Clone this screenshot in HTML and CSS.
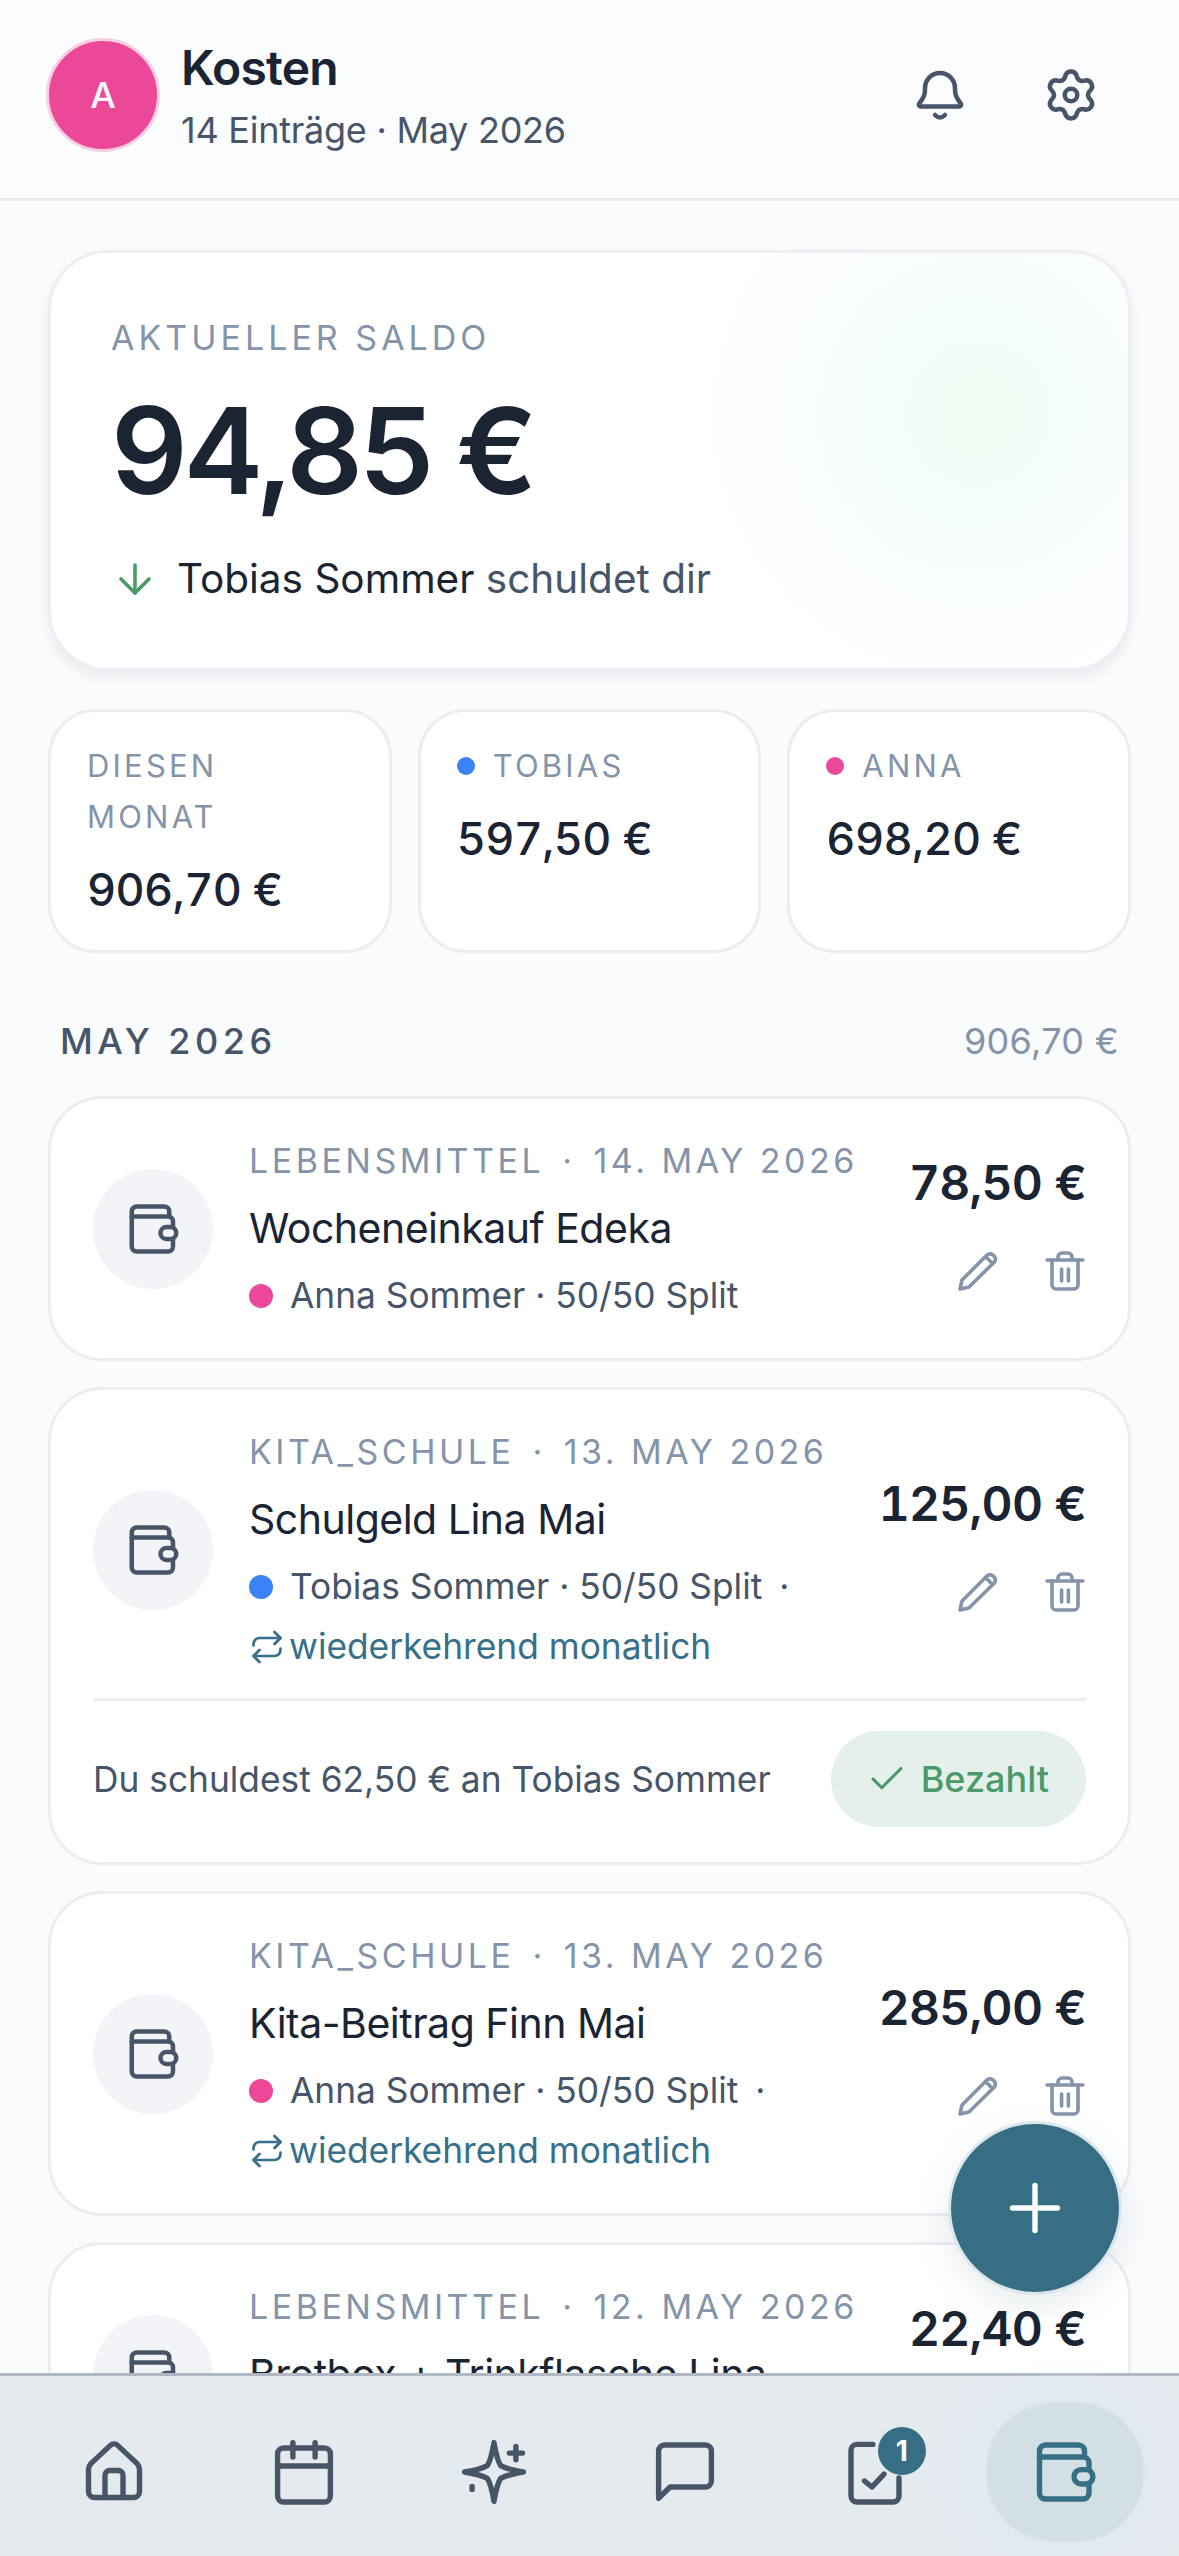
FILE: index.html
```html
<!DOCTYPE html>
<html lang="de">
<head>
	<title>Kosten</title>
	<meta charset="UTF-8">
	<meta name="viewport" content="width=device-width, initial-scale=1">
	<link rel="stylesheet" href="styles.css">
</head>
<body>
	<svg class="sprite" xmlns="http://www.w3.org/2000/svg">
		<symbol id="i-bell" viewBox="0 0 24 24"><path d="M4.200 16.600h15.600c.6 0 .9-.7.5-1.200-1.100-1.400-2.300-2.700-2.300-5.400V9.200a6 6 0 0 0-12 0V10c0 2.700-1.200 4-2.300 5.400-.4.500-.1 1.200.5 1.200Z"/><path d="M10 20c.6.6 1.300 1 2 1s1.400-.4 2-1"/></symbol>
		<symbol id="i-gear" viewBox="0 0 24 24"><path d="M9.850 3.980A2.400 2.400 0 0 1 14.150 3.980Q14.800 7.150 17.870 6.130A2.400 2.400 0 0 1 20.020 9.850Q17.600 12 20.020 14.150A2.400 2.400 0 0 1 17.870 17.870Q14.800 16.850 14.150 20.020A2.400 2.400 0 0 1 9.850 20.020Q9.200 16.850 6.130 17.870A2.400 2.400 0 0 1 3.980 14.150Q6.400 12 3.980 9.850A2.400 2.400 0 0 1 6.130 6.130Q9.200 7.150 9.850 3.980Z"/><circle cx="12" cy="12" r="2.500"/></symbol>
		<symbol id="i-wallet" viewBox="0 0 24 24"><path d="M18.500 7V5a2 2 0 0 0-2-2H5.500a2 2 0 0 0-2 2v14a2 2 0 0 0 2 2h12.500a2 2 0 0 0 2-2v-3"/><path d="M3.500 7h14.500a2 2 0 0 1 2 2v2.200"/><rect x="15" y="11.200" width="6.300" height="4.800" rx="2.400"/></symbol>
		<symbol id="i-pencil" viewBox="0 0 24 24"><path d="M4 16.500 16.600 3.900a2.600 2.600 0 0 1 3.600 3.600L7.500 20 3 21Z"/><path d="M16 5l3 3"/></symbol>
		<symbol id="i-trash" viewBox="0 0 24 24"><path d="M3 6.500h18"/><path d="M18.500 6.500V19a2 2 0 0 1-2 2h-9a2 2 0 0 1-2-2V6.500"/><path d="M8.500 6.500V5a2 2 0 0 1 2-2h3a2 2 0 0 1 2 2v1.500"/><path d="M10.300 11v6"/><path d="M13.700 11v6"/></symbol>
		<symbol id="i-repeat" viewBox="0 0 24 24"><path d="m17 2 4 4-4 4"/><path d="M3 11v-1a4 4 0 0 1 4-4h14"/><path d="m7 22-4-4 4-4"/><path d="M21 13v1a4 4 0 0 1-4 4H3"/></symbol>
	</svg>

	<div class="app">
		<header class="topbar">
			<div class="avatar">A</div>
			<div class="topbar-text">
				<h1>Kosten</h1>
				<p>14 Einträge · May 2026</p>
			</div>
			<div class="topbar-actions">
				<svg class="icon icon-60"><use href="#i-bell"/></svg>
				<svg class="icon icon-60"><use href="#i-gear"/></svg>
			</div>
		</header>

		<main class="content">
			<section class="hero">
				<div class="hero-label">AKTUELLER SALDO</div>
				<div class="hero-amount">94,85 €</div>
				<div class="hero-note">
					<svg class="icon icon-48 green" viewBox="0 0 24 24"><path d="M12 5v14"/><path d="m19 12-7 7-7-7"/></svg>
					<span><b>Tobias Sommer</b> schuldet dir</span>
				</div>
			</section>

			<section class="stats">
				<div class="stat">
					<div class="stat-label">DIESEN MONAT</div>
					<div class="stat-value">906,70 €</div>
				</div>
				<div class="stat">
					<div class="stat-label"><i class="dot dot-small blue"></i>TOBIAS</div>
					<div class="stat-value">597,50 €</div>
				</div>
				<div class="stat">
					<div class="stat-label"><i class="dot dot-small pink"></i>ANNA</div>
					<div class="stat-value">698,20 €</div>
				</div>
			</section>

			<div class="month">
				<span class="month-name">MAY 2026</span>
				<span class="month-sum">906,70 €</span>
			</div>

			<div class="list">
				<article class="entry">
					<div class="entry-row">
						<div class="entry-icon"><svg class="icon icon-60"><use href="#i-wallet"/></svg></div>
						<div class="entry-text">
							<div class="entry-label">LEBENSMITTEL<span class="sep">·</span>14. MAY 2026</div>
							<div class="entry-title">Wocheneinkauf Edeka</div>
							<div class="entry-meta"><i class="dot pink"></i>Anna Sommer · 50/50 Split</div>
						</div>
						<div class="entry-side">
							<div class="entry-amount">78,50 €</div>
							<div class="entry-actions">
								<svg class="icon icon-48 muted"><use href="#i-pencil"/></svg>
								<svg class="icon icon-48 muted"><use href="#i-trash"/></svg>
							</div>
						</div>
					</div>
				</article>

				<article class="entry">
					<div class="entry-row">
						<div class="entry-icon"><svg class="icon icon-60"><use href="#i-wallet"/></svg></div>
						<div class="entry-text">
							<div class="entry-label">KITA_SCHULE<span class="sep">·</span>13. MAY 2026</div>
							<div class="entry-title">Schulgeld Lina Mai</div>
							<div class="entry-meta"><i class="dot blue"></i>Tobias Sommer · 50/50 Split<span class="trail">·</span></div>
							<div class="entry-repeat"><svg class="icon icon-36"><use href="#i-repeat"/></svg>wiederkehrend monatlich</div>
						</div>
						<div class="entry-side">
							<div class="entry-amount">125,00 €</div>
							<div class="entry-actions">
								<svg class="icon icon-48 muted"><use href="#i-pencil"/></svg>
								<svg class="icon icon-48 muted"><use href="#i-trash"/></svg>
							</div>
						</div>
					</div>
					<div class="entry-foot">
						<span>Du schuldest 62,50 € an Tobias Sommer</span>
						<button class="paid" type="button">
							<svg class="icon icon-42" viewBox="0 0 24 24"><path d="M20 6 9 17l-5-5"/></svg>Bezahlt
						</button>
					</div>
				</article>

				<article class="entry">
					<div class="entry-row">
						<div class="entry-icon"><svg class="icon icon-60"><use href="#i-wallet"/></svg></div>
						<div class="entry-text">
							<div class="entry-label">KITA_SCHULE<span class="sep">·</span>13. MAY 2026</div>
							<div class="entry-title">Kita-Beitrag Finn Mai</div>
							<div class="entry-meta"><i class="dot pink"></i>Anna Sommer · 50/50 Split<span class="trail">·</span></div>
							<div class="entry-repeat"><svg class="icon icon-36"><use href="#i-repeat"/></svg>wiederkehrend monatlich</div>
						</div>
						<div class="entry-side">
							<div class="entry-amount">285,00 €</div>
							<div class="entry-actions">
								<svg class="icon icon-48 muted"><use href="#i-pencil"/></svg>
								<svg class="icon icon-48 muted"><use href="#i-trash"/></svg>
							</div>
						</div>
					</div>
				</article>

				<article class="entry">
					<div class="entry-row">
						<div class="entry-icon"><svg class="icon icon-60"><use href="#i-wallet"/></svg></div>
						<div class="entry-text">
							<div class="entry-label">LEBENSMITTEL<span class="sep">·</span>12. MAY 2026</div>
							<div class="entry-title">Brotbox + Trinkflasche Lina</div>
							<div class="entry-meta"><i class="dot pink"></i>Anna Sommer · 50/50 Split</div>
						</div>
						<div class="entry-side">
							<div class="entry-amount">22,40 €</div>
							<div class="entry-actions">
								<svg class="icon icon-48 muted"><use href="#i-pencil"/></svg>
								<svg class="icon icon-48 muted"><use href="#i-trash"/></svg>
							</div>
						</div>
					</div>
				</article>
			</div>
		</main>

		<button class="fab" type="button">
			<svg class="icon icon-72" viewBox="0 0 24 24"><path d="M4.500 12h15"/><path d="M12 4.500v15"/></svg>
		</button>

		<nav class="tabs">
			<div class="tab"><span class="tab-icon">
				<svg class="icon icon-72" viewBox="0 0 24 24"><path d="M10.700 3.200 4.200 9.300A3 3 0 0 0 3.500 11v7.500a2 2 0 0 0 2 2h13a2 2 0 0 0 2-2V11a3 3 0 0 0-.7-1.700l-6.500-6.100a1.900 1.900 0 0 0-2.600 0Z"/><path d="M9 20.500V13a1.500 1.500 0 0 1 1.500-1.500h3A1.500 1.500 0 0 1 15 13v7.500"/></svg>
			</span></div>
			<div class="tab"><span class="tab-icon">
				<svg class="icon icon-72" viewBox="0 0 24 24"><rect x="3.200" y="4" width="17.600" height="18" rx="2"/><path d="M3.200 10h17.600"/><path d="M8.300 2.200v4.800"/><path d="M15.700 2.200v4.800"/></svg>
			</span></div>
			<div class="tab"><span class="tab-icon">
				<svg class="icon icon-72" viewBox="0 0 24 24"><path d="M12 2.200Q13 8 14.200 9.800 16 11 21.800 12 16 13 14.200 14.200 13 16 12 21.800 11 16 9.800 14.200 8 13 2.200 12 8 11 9.800 9.800 11 8 12 2.200Z"/><path d="M19.300 3.500v4.400"/><path d="M17.100 5.700h4.400"/><path d="M4.700 16.800v1"/></svg>
			</span></div>
			<div class="tab"><span class="tab-icon">
				<svg class="icon icon-72" viewBox="0 0 24 24"><path d="M3.200 20.800V5a2 2 0 0 1 2-2h13.600a2 2 0 0 1 2 2v10a2 2 0 0 1-2 2H7Z"/></svg>
			</span></div>
			<div class="tab"><span class="tab-icon">
				<svg class="icon icon-72" viewBox="0 0 24 24"><path d="M11.300 2.800H6a2 2 0 0 0-2 2V20a2 2 0 0 0 2 2h12a2 2 0 0 0 2-2v-6"/><path d="M8.500 15 11 17 15 12.700"/></svg>
				<span class="badge">1</span>
			</span></div>
			<div class="tab tab-active"><span class="tab-icon">
				<svg class="icon icon-72"><use href="#i-wallet"/></svg>
			</span></div>
		</nav>
	</div>
</body>
</html>
```

FILE: styles.css
```css
* {
	box-sizing: border-box;
}
html, body {
	margin: 0;
	height: 100%;
}
body {
	font-family: Inter, "Liberation Sans", sans-serif;
	color: #1a2433;
	background: #fafbfd;
}
h1, p {
	margin: 0;
}
.sprite {
	display: none;
}
.app {
	position: relative;
	width: 1179px;
	height: 2556px;
	display: flex;
	flex-direction: column;
	overflow: hidden;
}

/* icons */
.icon {
	flex: none;
	fill: none;
	stroke: currentColor;
	stroke-width: 1.8;
	stroke-linecap: round;
	stroke-linejoin: round;
}
.icon-36 { width: 36px; height: 36px; }
.icon-42 { width: 42px; height: 42px; }
.icon-48 { width: 48px; height: 48px; }
.icon-60 { width: 60px; height: 60px; }
.icon-72 { width: 72px; height: 72px; }
.green { color: #4a9a6a; }
.muted { color: #8494a9; }

.dot {
	flex: none;
	display: inline-block;
	width: 24px;
	height: 24px;
	border-radius: 50%;
}
.dot-small {
	width: 18px;
	height: 18px;
}
.pink { background: #ec4899; }
.blue { background: #3b82f6; }

/* top bar */
.topbar {
	flex: none;
	height: 201px;
	display: flex;
	align-items: center;
	padding: 0 78px 9px 46px;
	background: #fbfcfe;
	border-bottom: 3px solid #e9ebee;
	gap: 21px;
}
.avatar {
	flex: none;
	width: 114px;
	height: 114px;
	display: flex;
	align-items: center;
	justify-content: center;
	border-radius: 50%;
	background: #ec4899;
	border: 3px solid #f8cfe2;
	color: #fff;
	font-size: 36px;
	font-weight: 500;
}
.topbar-text {
	flex: 1;
	padding-top: 3px;
}
.topbar-text h1 {
	font-size: 48px;
	font-weight: 600;
	line-height: 60px;
	letter-spacing: -.8px;
}
.topbar-text p {
	margin-top: 8px;
	font-size: 36px;
	line-height: 48px;
	letter-spacing: -.25px;
	color: #475569;
}
.topbar-actions {
	display: flex;
	gap: 71px;
	color: #475569;
}

/* scrolling part */
.content {
	flex: 1;
	min-height: 0;
	overflow: hidden;
	padding: 49px 48px 0;
}
.hero {
	height: 421px;
	padding: 61px 60px;
	background: radial-gradient(circle 290px at 927px 160px, #effbf3, rgba(239, 251, 243, 0)), #fff;
	border: 3px solid #eceef1;
	border-radius: 60px;
	box-shadow: 0 6px 12px rgba(30, 41, 59, .08);
}
.hero-label {
	font-size: 34px;
	line-height: 48px;
	letter-spacing: 4px;
	color: #8494a9;
}
.hero-amount {
	margin-top: 23px;
	font-size: 120px;
	font-weight: 600;
	line-height: 132px;
	letter-spacing: -4.200px;
}
.hero-note {
	margin-top: 35px;
	display: flex;
	align-items: center;
	gap: 18px;
	font-size: 40.500px;
	line-height: 54px;
	color: #475569;
}
.hero-note b {
	font-weight: 400;
	color: #1a2433;
}

.stats {
	margin-top: 38px;
	display: grid;
	grid-template-columns: repeat(3, 1fr);
	gap: 26px;
}
.stat {
	height: 244px;
	padding: 28px 36px;
	background: #fff;
	border: 3px solid #ebedf0;
	border-radius: 48px;
}
.stat-label {
	display: flex;
	align-items: center;
	gap: 18px;
	font-size: 31px;
	line-height: 51px;
	letter-spacing: 3.200px;
	color: #8494a9;
}
.stat-value {
	margin-top: 18px;
	font-size: 45px;
	font-weight: 500;
	line-height: 60px;
	letter-spacing: -.6px;
	font-variant-numeric: tabular-nums;
}

.month {
	margin-top: 55px;
	height: 66px;
	padding: 0 12px;
	display: flex;
	align-items: center;
	justify-content: space-between;
}
.month-name {
	font-size: 36px;
	font-weight: 500;
	letter-spacing: 4.500px;
	color: #475569;
}
.month-sum {
	font-size: 36px;
	letter-spacing: .3px;
	color: #8494a9;
}

/* entries */
.list {
	margin-top: 22px;
	display: flex;
	flex-direction: column;
	gap: 26px;
}
.entry {
	padding: 38px 42px;
	background: #fff;
	border: 3px solid #ebedf0;
	border-radius: 54px;
}
.entry-row {
	display: flex;
	align-items: center;
}
.entry-icon {
	flex: none;
	width: 120px;
	height: 120px;
	margin-right: 36px;
	display: flex;
	align-items: center;
	justify-content: center;
	border-radius: 50%;
	background: #f2f4f8;
	color: #475569;
}
.entry-text {
	flex: 1;
	min-width: 0;
}
.entry-label {
	font-size: 34px;
	line-height: 48px;
	letter-spacing: 3.500px;
	white-space: nowrap;
	color: #8494a9;
}
.sep {
	margin: 0 18px;
}
.entry-title {
	margin-top: 13px;
	font-size: 41px;
	line-height: 60px;
	letter-spacing: -.5px;
	white-space: nowrap;
}
.entry-meta {
	margin-top: 14px;
	display: flex;
	align-items: center;
	gap: 17px;
	font-size: 35.300px;
	line-height: 48px;
	white-space: nowrap;
	color: #475569;
}
.entry-repeat {
	margin-top: 12px;
	display: flex;
	align-items: center;
	gap: 4px;
	font-size: 35.300px;
	line-height: 48px;
	white-space: nowrap;
	color: #36708a;
}
.entry-side {
	flex: none;
	padding-bottom: 9px;
	display: flex;
	flex-direction: column;
	align-items: flex-end;
}
.entry-amount {
	font-size: 48px;
	font-weight: 600;
	line-height: 60px;
	letter-spacing: -.8px;
	white-space: nowrap;
	font-variant-numeric: tabular-nums;
}
.entry-actions {
	margin-top: 34px;
	margin-right: -3px;
	display: flex;
	gap: 39px;
}
.entry-foot {
	margin-top: 27px;
	margin-bottom: -3px;
	padding-top: 30px;
	border-top: 3px solid #ebedf0;
	display: flex;
	align-items: center;
	justify-content: space-between;
	font-size: 35.300px;
	color: #475569;
}
.paid {
	height: 96px;
	padding: 0 37px 0 35px;
	display: flex;
	align-items: center;
	gap: 13px;
	border: none;
	border-radius: 48px;
	background: #e6f0ea;
	color: #4a9a6a;
	font-family: inherit;
	font-size: 36px;
	font-weight: 500;
}

/* floating add button */
.fab {
	position: absolute;
	right: 57px;
	top: 2121px;
	width: 174px;
	height: 174px;
	display: flex;
	align-items: center;
	justify-content: center;
	padding: 0;
	border: 3px solid #dbe7ec;
	border-radius: 50%;
	background: #366f84;
	color: #fff;
	box-shadow: 0 12px 36px rgba(54, 111, 132, .12);
}

/* bottom tabs */
.tabs {
	flex: none;
	position: relative;
	height: 183px;
	padding: 12px 19px 0;
	display: flex;
	background: #e5eaef;
	border-top: 3px solid #b0b8c3;
}
.tab {
	flex: 1;
	display: flex;
	align-items: center;
	justify-content: center;
	color: #475569;
}
.tab-icon {
	position: relative;
	display: flex;
	align-items: center;
	justify-content: center;
}
.tab-active .tab-icon {
	width: 160px;
	height: 142px;
	border: 2px solid #e2e6ea;
	border-radius: 68px;
	background: #d2e0e6;
	color: #366f84;
	box-shadow: 0 0 30px 14px rgba(222, 232, 243, .7);
}
.badge {
	position: absolute;
	left: 39px;
	top: -9px;
	width: 48px;
	height: 48px;
	display: flex;
	align-items: center;
	justify-content: center;
	border-radius: 50%;
	background: #366f84;
	color: #fff;
	font-size: 28px;
	font-weight: 700;
}
```
